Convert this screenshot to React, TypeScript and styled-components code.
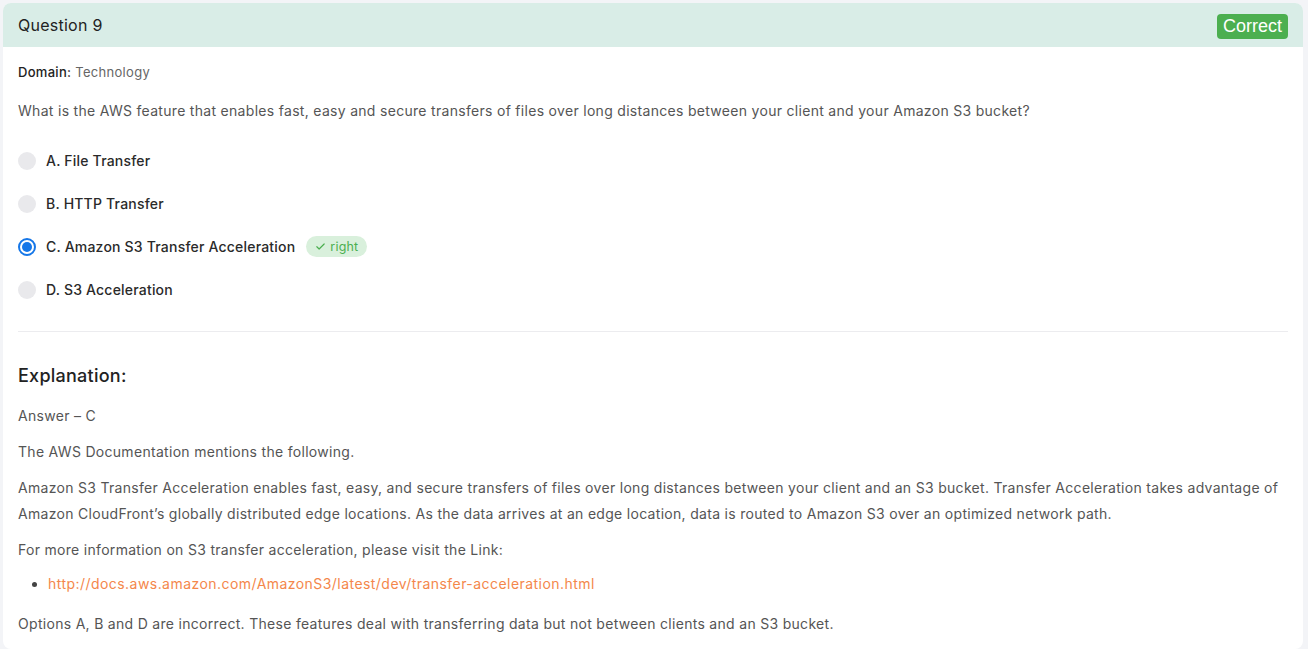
import React from "react";
import styled, { createGlobalStyle } from "styled-components";

const GlobalStyle = createGlobalStyle`
  html, body { margin: 0; padding: 0; background: #f3f4f7; }
  body { font-family: "Inter", "Noto Sans", sans-serif; color: #555; }
  * { box-sizing: border-box; }
`;

const Page = styled.div`
  padding: 3px 5px 0 3px;
  min-height: 649px;
`;

const Card = styled.div`
  background: #fff;
  border-radius: 8px;
  overflow: hidden;
  min-height: 646px;
`;

const Header = styled.div`
  height: 44px;
  background: #d9ede7;
  display: flex;
  align-items: center;
  justify-content: space-between;
  padding: 0 15px 0 15px;
`;

const Title = styled.div`
  font-size: 16px;
  color: #222;
  letter-spacing: 0.25px;
`;

const StatusBadge = styled.span`
  background: #4caf50;
  color: #fff;
  font-family: "Liberation Sans", Arial, sans-serif;
  font-size: 18px;
  line-height: 22px;
  padding: 1px 6px 2px;
  border-radius: 4px;
  margin-top: 2px;
`;

const Body = styled.div`
  padding: 15px 15px 0 15px;
  letter-spacing: 0.3px;
`;

const Domain = styled.div`
  font-size: 13px;
  line-height: 20px;
  color: #666;
`;

const DomainLabel = styled.span`
  color: #222;
  font-weight: 500;
`;

const QuestionText = styled.p`
  margin: 19px 0 0;
  font-size: 14px;
  line-height: 20px;
  color: #555;
`;

const Options = styled.div`
  margin-top: 18px;
  display: flex;
  flex-direction: column;
`;

const OptionRow = styled.label`
  height: 43px;
  display: flex;
  align-items: center;
  gap: 10px;
  font-size: 14px;
  color: #2a2a2a;
  font-weight: 500;
  letter-spacing: 0.2px;
`;

const Radio = styled.span<{ $checked?: boolean }>`
  width: 18px;
  height: 18px;
  border-radius: 50%;
  flex: none;
  background: ${(p) => (p.$checked ? "#fff" : "#e9e9ec")};
  border: ${(p) => (p.$checked ? "2px solid #1677e8" : "none")};
  display: flex;
  align-items: center;
  justify-content: center;
  &::after {
    content: "";
    display: ${(p) => (p.$checked ? "block" : "none")};
    width: 10px;
    height: 10px;
    border-radius: 50%;
    background: #1677e8;
  }
`;

const RightPill = styled.span`
  margin-left: 1px;
  display: inline-flex;
  align-items: center;
  gap: 4px;
  height: 21px;
  padding: 0 9px 0 9px;
  border-radius: 11px;
  background: #d9f0dc;
  color: #4caf50;
  font-size: 12.5px;
  font-weight: 400;
  letter-spacing: 0.2px;
`;

const Divider = styled.hr`
  margin: 20px 0 0;
  border: none;
  border-top: 1px solid #ececef;
`;

const ExplanationTitle = styled.h3`
  margin: 31px 0 0;
  font-size: 18px;
  line-height: 26px;
  font-weight: 500;
  color: #222;
  letter-spacing: 0.25px;
`;

const Para = styled.p<{ $gap?: number }>`
  margin: ${(p) => p.$gap ?? 10}px 0 0;
  font-size: 14px;
  line-height: 26px;
  color: #555;
`;

const LinkList = styled.ul`
  margin: 8px 0 0;
  padding-left: 30px;
  font-size: 14px;
  line-height: 26px;
  color: #444;
`;

const LinkItem = styled.li`
  &::marker {
    color: #444;
  }
`;

const Link = styled.a`
  color: #f4874b;
  text-decoration: none;
  letter-spacing: 0.45px;
`;

const Check = () => (
  <svg width="11" height="11" viewBox="0 0 24 24" fill="none" stroke="#4caf50" strokeWidth="2.5" strokeLinecap="round" strokeLinejoin="round">
    <path d="M4 12.5l5 5L20 6.5" />
  </svg>
);

const options = [
  { label: "A. File Transfer" },
  { label: "B. HTTP Transfer" },
  { label: "C. Amazon S3 Transfer Acceleration", checked: true, right: true },
  { label: "D. S3 Acceleration" },
];

export default function App() {
  return (
    <>
      <GlobalStyle />
      <Page>
        <Card>
          <Header>
            <Title>Question 9</Title>
            <StatusBadge>Correct</StatusBadge>
          </Header>
          <Body>
            <Domain>
              <DomainLabel>Domain:</DomainLabel> Technology
            </Domain>
            <QuestionText>
              What is the AWS feature that enables fast, easy and secure transfers of files over long distances between your client and your Amazon S3 bucket?
            </QuestionText>
            <Options>
              {options.map((o) => (
                <OptionRow key={o.label}>
                  <Radio $checked={o.checked} />
                  {o.label}
                  {o.right && (
                    <RightPill>
                      <Check />
                      right
                    </RightPill>
                  )}
                </OptionRow>
              ))}
            </Options>
            <Divider />
            <ExplanationTitle>Explanation:</ExplanationTitle>
            <Para $gap={14}>Answer – C</Para>
            <Para>The AWS Documentation mentions the following.</Para>
            <Para>
              Amazon S3 Transfer Acceleration enables fast, easy, and secure transfers of files over long distances between your client and an S3 bucket. Transfer Acceleration takes advantage of Amazon CloudFront’s globally distributed edge locations. As the data arrives at an edge location, data is routed to Amazon S3 over an optimized network path.
            </Para>
            <Para>For more information on S3 transfer acceleration, please visit the Link:</Para>
            <LinkList>
              <LinkItem>
                <Link href="#">http://docs.aws.amazon.com/AmazonS3/latest/dev/transfer-acceleration.html</Link>
              </LinkItem>
            </LinkList>
            <Para $gap={14}>Options A, B and D are incorrect. These features deal with transferring data but not between clients and an S3 bucket.</Para>
          </Body>
        </Card>
      </Page>
    </>
  );
}
